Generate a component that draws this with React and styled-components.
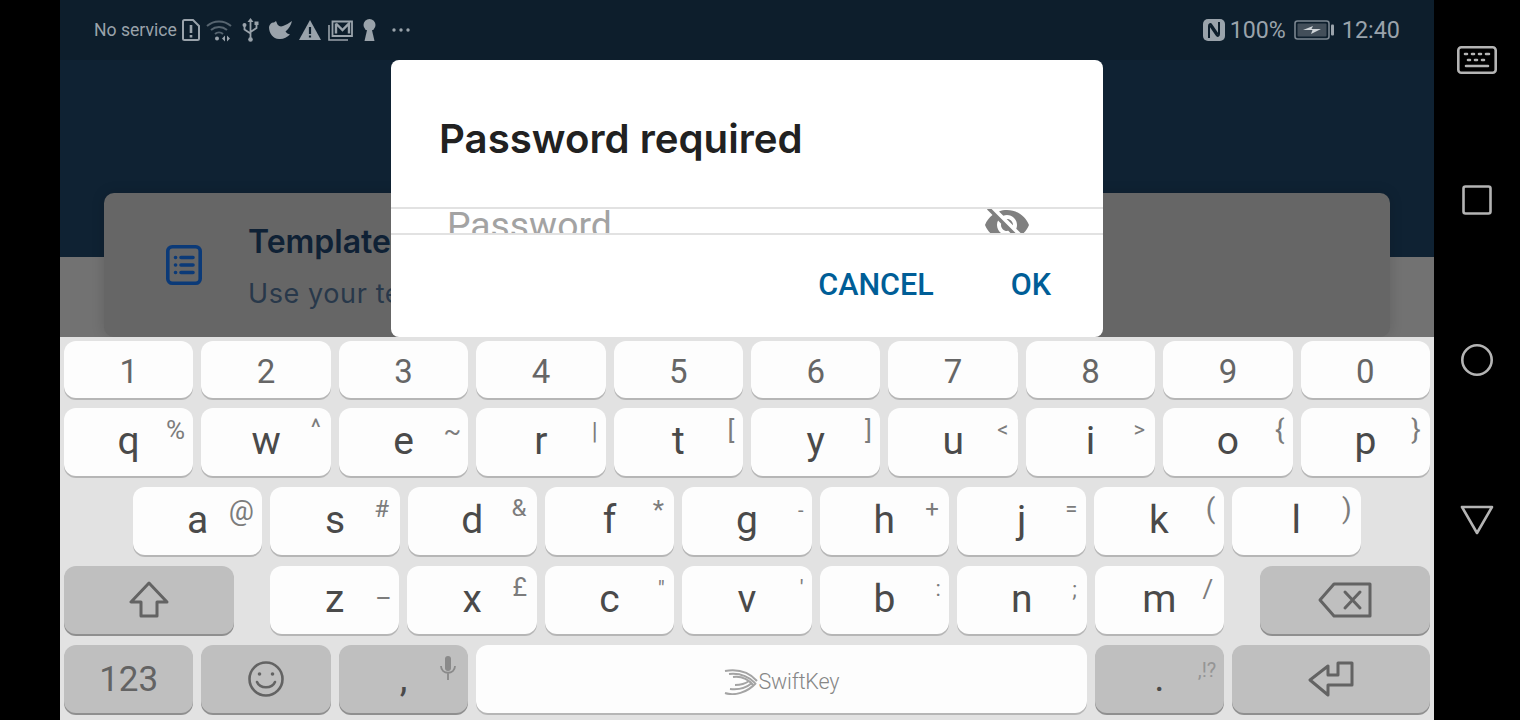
import React from "react";
import styled, { createGlobalStyle } from "styled-components";

const Global = createGlobalStyle`
  html, body { margin: 0; height: 100%; background: #000; overflow: hidden; }
  #root { height: 100%; }
  * { box-sizing: border-box; }
`;

const Page = styled.div`
  display: flex;
  width: 1520px;
  height: 720px;
  background: #000;
  font-family: Roboto, "Liberation Sans", sans-serif;
`;

const Phone = styled.div`
  position: relative;
  display: flex;
  flex-direction: column;
  width: 1374px;
  margin-left: 60px;
`;

const Screen = styled.div`
  height: 337px;
  overflow: hidden;
  background: linear-gradient(#0f2233 257px, #727272 257px);
`;

const StatusBar = styled.div`
  display: flex;
  align-items: center;
  justify-content: space-between;
  height: 60px;
  padding: 0 34px;
  background: #0d1e2c;
  color: #9aa3ab;
`;

const StatusGroup = styled.div`
  display: flex;
  align-items: center;
`;

const StatusSlot = styled.span`
  display: flex;
  margin-left: ${(p) => p.$ml || 0}px;
`;

const StatusLabel = styled.span`
  margin: 2px 0 0 ${(p) => p.$ml || 0}px;
  font-size: ${(p) => p.$size || 17.6}px;
  line-height: 1;
`;

const Card = styled.div`
  display: flex;
  align-items: center;
  gap: 47px;
  height: 144px;
  margin: 133px 44px 0;
  padding-left: 62px;
  background: #666;
  border-radius: 10px;
  box-shadow: 0 0 14px rgba(0, 0, 0, 0.14);
  font-family: Inter, sans-serif;
`;

const CardText = styled.div`
  display: flex;
  flex-direction: column;
  gap: 17px;
  margin: 4px 0 0 -1px;
`;

const CardTitle = styled.div`
  font-size: 32px;
  line-height: 36px;
  font-weight: 600;
  white-space: nowrap;
  color: #0f2135;
`;

const CardSub = styled.div`
  font-size: 27px;
  line-height: 34px;
  letter-spacing: 0.6px;
  white-space: nowrap;
  color: #28384a;
`;

const Overlay = styled.div`
  position: absolute;
  top: 60px;
  left: 0;
  right: 0;
  display: flex;
  justify-content: center;
`;

const Dialog = styled.div`
  display: flex;
  flex-direction: column;
  width: 712px;
  height: 277px;
  background: #fff;
  border-radius: 8px;
`;

const DialogTitle = styled.h2`
  height: 147px;
  margin: 0;
  padding: 56px 48px 0;
  font-family: Inter, sans-serif;
  font-size: 40.2px;
  line-height: 46px;
  font-weight: 600;
  color: #212121;
`;

const Field = styled.div`
  display: flex;
  align-items: flex-start;
  justify-content: space-between;
  height: 28px;
  padding: 0 72px 0 56px;
  overflow: hidden;
  border-top: 2px solid #e2e2e2;
  border-bottom: 2px solid #e2e2e2;
`;

const Placeholder = styled.span`
  margin-top: -2px;
  font-size: 37.3px;
  line-height: 37px;
  color: #a3a3a3;
`;

const EyeIcon = styled.svg`
  flex: none;
  margin-top: -8px;
  fill: #808080;
`;

const Actions = styled.div`
  display: flex;
  flex: 1;
  align-items: center;
  justify-content: flex-end;
  gap: 77px;
  padding: 0 52px 4px 0;
`;

const ActionButton = styled.button`
  padding: 0;
  border: 0;
  background: none;
  font-family: Roboto, sans-serif;
  font-size: 30.5px;
  font-weight: 500;
  color: #005e97;
`;

const Keyboard = styled.div`
  display: flex;
  flex: 1;
  flex-direction: column;
  gap: 11px;
  padding: 4px 4px 0;
  background: #e2e2e2;
`;

const KeyRow = styled.div`
  display: flex;
  gap: 8px;
  padding: 0 ${(p) => p.$inset || 0}px;
`;

const NumberRow = styled(KeyRow)`
  margin-bottom: -1px;
`;

const Key = styled.div`
  position: relative;
  display: flex;
  align-items: center;
  justify-content: center;
  flex: ${(p) => (p.$w ? `none` : 1)};
  width: ${(p) => (p.$w ? `${p.$w}px` : "auto")};
  height: ${(p) => p.$h || 68}px;
  margin: 0 ${(p) => p.$mr || 0}px 0 ${(p) => p.$ml || 0}px;
  border-radius: 12px;
  background: ${(p) => (p.$dark ? "#bfbfbf" : "#fdfdfd")};
  box-shadow: 0 2px 0 ${(p) => (p.$dark ? "#8f8f8f" : "#b6b6b6")};
  color: #4a4a4a;
`;

const Letter = styled.span`
  margin-top: -2px;
  font-size: 39px;
  line-height: 1;
`;

const Digit = styled.span`
  margin-top: 3px;
  font-size: 33px;
  line-height: 1;
  color: #666;
`;

const Hint = styled.span`
  position: absolute;
  top: ${(p) => p.$t}px;
  right: ${(p) => p.$r}px;
  transform: translate(50%, -50%);
  font-size: ${(p) => p.$s || 24}px;
  line-height: 1;
  color: ${(p) => p.$c || "#7c7c7c"};
`;

const FuncLabel = styled.span`
  font-size: ${(p) => p.$s || 35}px;
  line-height: 1;
  color: #636363;
`;

const Brand = styled.div`
  display: flex;
  align-items: center;
  gap: 1px;
  margin-top: 5px;
  font-size: 21.5px;
  font-weight: 300;
  letter-spacing: -0.2px;
  color: #868686;
`;

const NavBar = styled.div`
  display: grid;
  flex: 1;
  grid-template-rows: 120px 160px 160px 160px;
  justify-items: center;
  align-items: center;
`;

const NavIcon = styled.svg`
  fill: none;
  stroke: #b4b4b4;
  stroke-width: 2.6;
  stroke-linejoin: round;
  stroke-linecap: round;
`;

const row1 = "1234567890".split("");

const row2 = [
  ["q", "%", 18, 22, 26],
  ["w", "^", 15, 20, 24],
  ["e", "~", 16, 23, 26],
  ["r", "|", 11, 23, 24],
  ["t", "[", 12, 22, 26],
  ["y", "]", 12, 22, 26],
  ["u", "<", 15, 22, 22],
  ["i", ">", 16, 22, 22],
  ["o", "{", 13, 22, 28],
  ["p", "}", 14, 22, 28],
];

const row3 = [
  ["a", "@", 21, 24, 28],
  ["s", "#", 18, 22, 24],
  ["d", "&", 18, 21, 24],
  ["f", "*", 16, 23, 26],
  ["g", "-", 11, 23, 20],
  ["h", "+", 17, 22, 24],
  ["j", "=", 15, 22, 22],
  ["k", "(", 13, 22, 28],
  ["l", ")", 14, 22, 28],
];

const row4 = [
  ["z", "–", 16, 32, 25],
  ["x", "£", 17, 21, 25],
  ["c", '"', 13, 23, 22],
  ["v", "'", 10, 22, 22],
  ["b", ":", 11, 23, 22],
  ["n", ";", 12, 24, 22],
  ["m", "/", 16, 23, 26],
];

const LetterKey = ({ item }) => (
  <Key>
    <Letter>{item[0]}</Letter>
    <Hint $r={item[2]} $t={item[3]} $s={item[4]}>
      {item[1]}
    </Hint>
  </Key>
);

const Sim = () => (
  <svg width="18" height="22" viewBox="0 0 18 22" fill="none" stroke="currentColor" strokeWidth="2">
    <path d="M2.5 1h8.5l6 6v12.5a1.5 1.5 0 0 1-1.5 1.5h-13A1.500 1.500 0 0 1 1 19.500V2.500A1.500 1.500 0 0 1 2.500 1z" />
    <path d="M9 6v8M9 16v2.500" strokeWidth="2.600" />
  </svg>
);

const Wifi = () => (
  <svg width="28" height="23" viewBox="0 0 28 23" fill="none" stroke="#56646f" strokeWidth="2">
    <path d="M1 7a18 18 0 0 1 24 0M5 11a12.500 12.500 0 0 1 16 0M9 15a6 6 0 0 1 8 0" />
    <circle cx="11" cy="19.500" r="2" fill="#9aa3ab" stroke="none" />
    <path d="M19 16.500l-3 3 3 3zM21 16.500l3 3-3 3z" fill="#9aa3ab" stroke="none" />
  </svg>
);

const Usb = () => (
  <svg width="17" height="24" viewBox="0 0 17 24" fill="none" stroke="currentColor" strokeWidth="1.800">
    <path d="M8.500 3v18M2.500 8v3.500l6 4M14.500 6v4l-6 4" />
    <path d="M8.500 0l3 4h-6z" fill="currentColor" stroke="none" />
    <circle cx="8.500" cy="21.500" r="2.300" fill="currentColor" stroke="none" />
    <circle cx="2.500" cy="7" r="2" fill="currentColor" stroke="none" />
    <rect x="12.500" y="3.500" width="4" height="3.500" fill="currentColor" stroke="none" />
  </svg>
);

const Bird = () => (
  <svg width="23" height="20" viewBox="0 0 23 20" fill="currentColor">
    <path d="M0 7C.5 4 3 2 5 2.500L7 1l1.500 3.500c1.500 2 3.500 2.500 5.500 1.500 3-1 6-3 9-5-1 4-3 8-6.500 10.500 1 1.500 2.500 2.500 4.500 3-3 3-7 5-11 4.500C4 19 0 13 0 7z" />
  </svg>
);

const Warning = () => (
  <svg width="22" height="20" viewBox="0 0 22 20">
    <path d="M11 0l11 20H0z" fill="currentColor" />
    <path d="M11 7v7M11 15.500v2" stroke="#0d1e2c" strokeWidth="2.200" />
  </svg>
);

const MailStack = () => (
  <svg width="25" height="21" viewBox="0 0 25 21" fill="none" stroke="currentColor" strokeWidth="1.600">
    <path d="M1 5v15h19" />
    <path d="M4.500 1.500h19.500v14.500h-19.500z" strokeWidth="1.800" />
    <path d="M8 3.500l6.500 6.500 6.500-6.500v10M8 3.500v10" strokeWidth="2.400" />
  </svg>
);

const Keyhole = () => (
  <svg width="13" height="22" viewBox="0 0 13 22" fill="currentColor">
    <circle cx="6.500" cy="6" r="6" />
    <path d="M4.500 9h4l3 13H1.500z" />
  </svg>
);

const Dots = () => (
  <svg width="18" height="4" viewBox="0 0 18 4" fill="currentColor">
    <circle cx="2" cy="2" r="1.700" />
    <circle cx="9" cy="2" r="1.700" />
    <circle cx="16" cy="2" r="1.700" />
  </svg>
);

const Nfc = () => (
  <svg width="22" height="22" viewBox="0 0 22 22">
    <rect width="22" height="22" rx="5" fill="#9aa3ab" />
    <path d="M6 19V7c0-2 1.500-2.500 2.500-1L15 15.500M16 3v12c0 2-1.500 2.500-2.500 1L7 6.500" fill="none" stroke="#0d1e2c" strokeWidth="2" />
  </svg>
);

const Battery = () => (
  <svg width="40" height="20" viewBox="0 0 40 20">
    <rect x="1" y="1" width="34" height="18" rx="2.500" fill="none" stroke="#7b8690" strokeWidth="1.600" />
    <rect x="3.500" y="3.500" width="29" height="13" rx="1" fill="#434f5a" />
    <rect x="37" y="4.500" width="3" height="11" rx="1" fill="#9aa3ab" />
    <path d="M9 10l10-4-1.500 3H27l-10 5 1.500-4z" fill="#d0d5d9" />
  </svg>
);

const ListIcon = () => (
  <svg width="36" height="40" viewBox="0 0 36 40" fill="none" stroke="#0b3a78" strokeWidth="3.600" strokeLinecap="round">
    <rect x="1.800" y="1.800" width="32.400" height="36.400" rx="4.500" />
    <path d="M15 12.500h12M15 20h12M15 27.500h12" />
    <path d="M9.500 12.500h.1M9.500 20h.1M9.500 27.500h.1" />
  </svg>
);

const EyeOff = () => (
  <EyeIcon width="48" height="48" viewBox="0 0 24 24">
    <path d="M12 7c2.760 0 5 2.240 5 5 0 .650-.130 1.260-.360 1.830l2.920 2.920c1.510-1.260 2.700-2.890 3.430-4.750-1.730-4.390-6-7.500-11-7.500-1.400 0-2.740.250-3.980.700l2.160 2.160C10.740 7.130 11.350 7 12 7zM2 4.270l2.280 2.280.460.460C3.080 8.300 1.780 10.020 1 12c1.730 4.390 6 7.500 11 7.500 1.550 0 3.030-.300 4.380-.840l.420.420L19.730 22 21 20.730 3.270 3 2 4.270zM7.530 9.800l1.550 1.550c-.050.210-.080.430-.080.650 0 1.660 1.340 3 3 3 .220 0 .440-.030.650-.080l1.550 1.550c-.670.330-1.410.530-2.200.530-2.760 0-5-2.240-5-5 0-.790.200-1.530.530-2.200zm4.310-.780l3.150 3.150.020-.160c0-1.660-1.340-3-3-3l-.170.010z" />
  </EyeIcon>
);

const ShiftIcon = () => (
  <svg width="40" height="38" viewBox="0 0 40 38" fill="none" stroke="#636363" strokeWidth="3" strokeLinejoin="round">
    <path d="M20 2L2 21h10v14h16V21h10z" />
  </svg>
);

const BackIcon = () => (
  <svg width="54" height="36" viewBox="0 0 54 36" fill="none" stroke="#636363" strokeWidth="3" strokeLinejoin="round" strokeLinecap="round">
    <path d="M16 2h36v32H16L2 18z" />
    <path d="M27 10l15 16M42 10L27 26" />
  </svg>
);

const EnterIcon = () => (
  <svg width="46" height="36" viewBox="0 0 46 36" fill="none" stroke="#636363" strokeWidth="3" strokeLinejoin="round">
    <path d="M30 2h14v22H20v10L2 19 20 5v9h10z" />
  </svg>
);

const Smile = () => (
  <svg width="36" height="36" viewBox="0 0 36 36" fill="none" stroke="#636363" strokeWidth="2.600" strokeLinecap="round">
    <circle cx="18" cy="18" r="16.500" />
    <path d="M9 21c3 7 15 7 18 0" />
    <circle cx="11.500" cy="13" r="1.800" fill="#636363" stroke="none" />
    <circle cx="24.500" cy="13" r="1.800" fill="#636363" stroke="none" />
  </svg>
);

const MicGlyph = styled.svg`
  position: absolute;
  top: 11px;
  right: 12px;
  fill: none;
  stroke: #8a8a8a;
  stroke-width: 1.800;
`;

const Mic = () => (
  <MicGlyph width="16" height="24" viewBox="0 0 16 24">
    <rect x="5" y="0" width="6" height="15" rx="3" fill="#8a8a8a" stroke="none" />
    <path d="M1 10c0 9 14 9 14 0M8 17v7" />
  </MicGlyph>
);

const SwiftLogo = () => (
  <svg width="34" height="26" viewBox="0 0 34 26" fill="none" stroke="#a4a4a4" strokeWidth="2">
    <path d="M1 2c12-2 24 1 32 10M5 5c9-1 19 2 26 9M9 8c8-1 15 2 20 8" />
    <path d="M1 24c9 3 22 0 31-10M6 20c8 1 16-1 22-6M11 16c5 0 10-1 14-4" />
  </svg>
);

const App = () => {
  return (
    <Page>
      <Global />
      <Phone>
        <Screen>
          <StatusBar>
            <StatusGroup>
              <StatusLabel>No service</StatusLabel>
              <StatusSlot $ml={5}><Sim /></StatusSlot>
              <StatusSlot $ml={6}><Wifi /></StatusSlot>
              <StatusSlot $ml={8}><Usb /></StatusSlot>
              <StatusSlot $ml={10}><Bird /></StatusSlot>
              <StatusSlot $ml={7}><Warning /></StatusSlot>
              <StatusSlot $ml={7}><MailStack /></StatusSlot>
              <StatusSlot $ml={10}><Keyhole /></StatusSlot>
              <StatusSlot $ml={16}><Dots /></StatusSlot>
            </StatusGroup>
            <StatusGroup>
              <Nfc />
              <StatusLabel $size={23.2} $ml={5}>100%</StatusLabel>
              <StatusSlot $ml={8}><Battery /></StatusSlot>
              <StatusLabel $size={23.4} $ml={8}>12:40</StatusLabel>
            </StatusGroup>
          </StatusBar>
          <Card>
            <ListIcon />
            <CardText>
              <CardTitle>Templates</CardTitle>
              <CardSub>Use your templates</CardSub>
            </CardText>
          </Card>
        </Screen>
        <Overlay>
          <Dialog>
            <DialogTitle>Password required</DialogTitle>
            <Field>
              <Placeholder>Password</Placeholder>
              <EyeOff />
            </Field>
            <Actions>
              <ActionButton>CANCEL</ActionButton>
              <ActionButton>OK</ActionButton>
            </Actions>
          </Dialog>
        </Overlay>
        <Keyboard>
          <NumberRow>
            {row1.map((d) => (
              <Key key={d} $h={57}>
                <Digit>{d}</Digit>
              </Key>
            ))}
          </NumberRow>
          <KeyRow>
            {row2.map((item) => (
              <LetterKey key={item[0]} item={item} />
            ))}
          </KeyRow>
          <KeyRow $inset={69}>
            {row3.map((item) => (
              <LetterKey key={item[0]} item={item} />
            ))}
          </KeyRow>
          <KeyRow>
            <Key $dark $w={170} $mr={28}>
              <ShiftIcon />
            </Key>
            {row4.map((item) => (
              <LetterKey key={item[0]} item={item} />
            ))}
            <Key $dark $w={170} $ml={28}>
              <BackIcon />
            </Key>
          </KeyRow>
          <KeyRow>
            <Key $dark $w={129.4}>
              <FuncLabel>123</FuncLabel>
            </Key>
            <Key $dark $w={129.4}>
              <Smile />
            </Key>
            <Key $dark $w={129.4}>
              <Letter>,</Letter>
              <Mic />
            </Key>
            <Key>
              <Brand>
                <SwiftLogo />
                SwiftKey
              </Brand>
            </Key>
            <Key $dark $w={129.4}>
              <Letter>.</Letter>
              <Hint $r={17} $t={25} $s={20} $c="#959595">
                ,!?
              </Hint>
            </Key>
            <Key $dark $w={198}>
              <EnterIcon />
            </Key>
          </KeyRow>
        </Keyboard>
      </Phone>
      <NavBar>
        <NavIcon width="40" height="28" viewBox="0 0 40 28">
          <rect x="1.300" y="1.300" width="37.400" height="25.400" rx="3" />
          <path d="M8 8h2M15 8h2M22 8h2M29 8h3M11 14h2M18 14h2M25 14h2M9 20h22" />
        </NavIcon>
        <NavIcon width="30" height="30" viewBox="0 0 30 30">
          <rect x="1.500" y="1.500" width="27" height="27" rx="2" />
        </NavIcon>
        <NavIcon width="32" height="32" viewBox="0 0 32 32">
          <circle cx="16" cy="16" r="14.700" />
        </NavIcon>
        <NavIcon width="34" height="30" viewBox="0 0 34 30">
          <path d="M2 2h30L17 28z" />
        </NavIcon>
      </NavBar>
    </Page>
  );
};

export default App;
